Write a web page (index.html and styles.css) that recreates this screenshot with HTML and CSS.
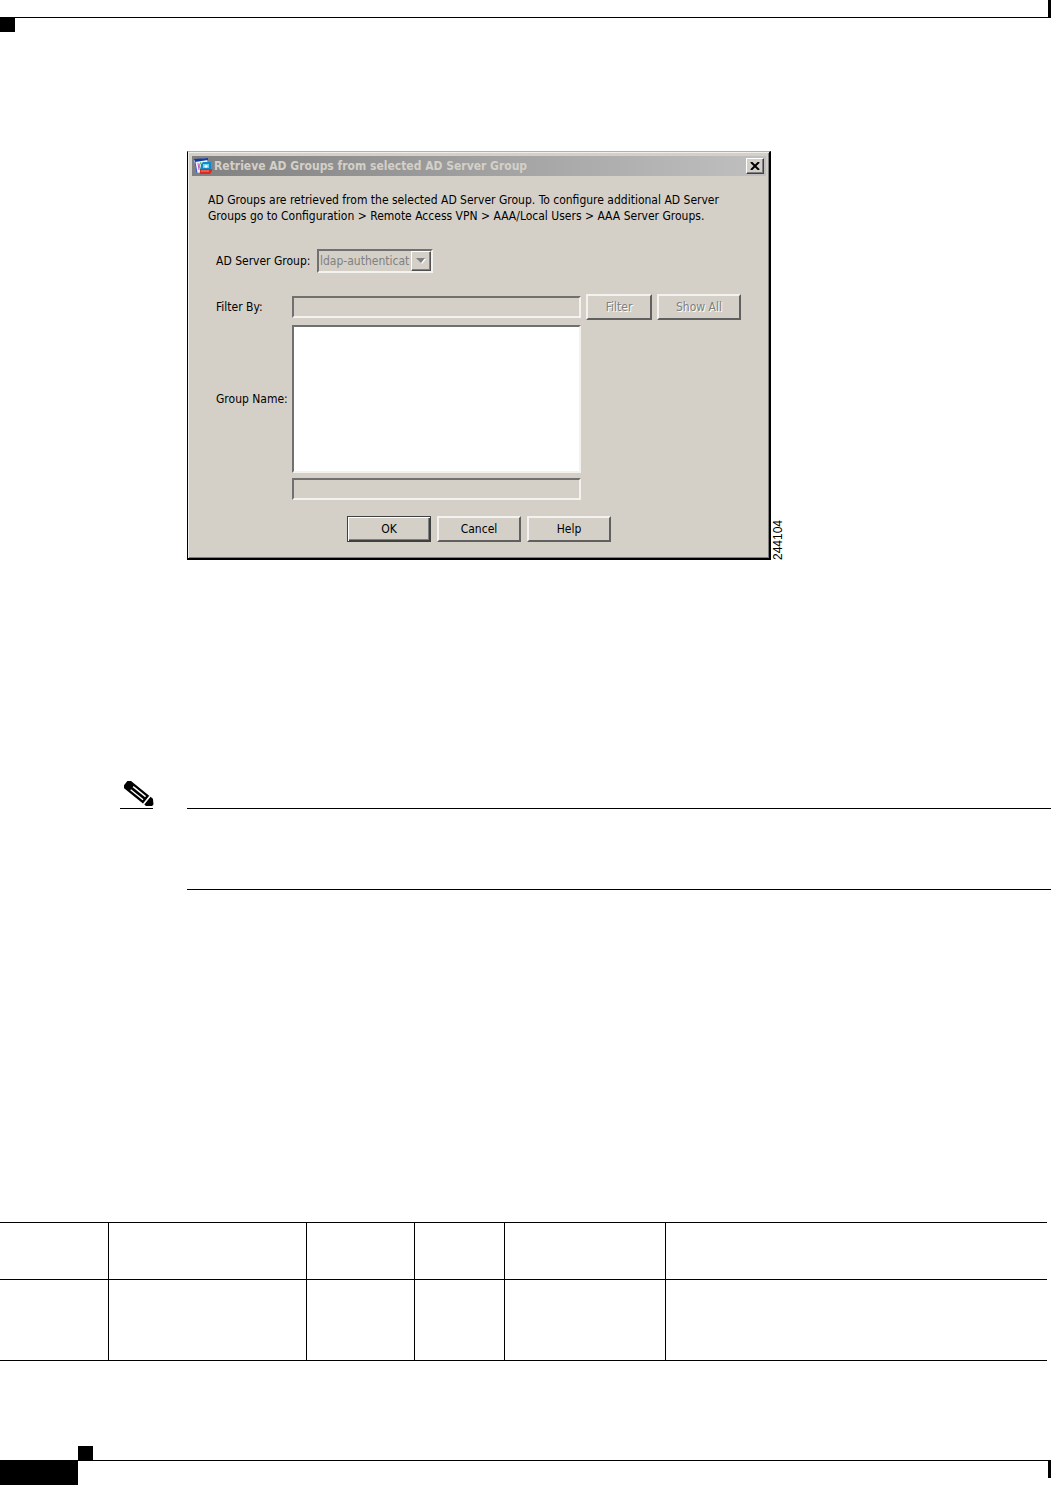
FILE: index.html
```
<!doctype html>
<html lang="en">

<head>
	<meta charset="utf-8">
	<title>Retrieve AD Groups</title>
	<link rel="stylesheet" href="styles.css">
</head>

<body>
	<!-- Page header rule -->
	<header class="page-header">
		<div class="header-tick"></div>
		<div class="header-square"></div>
	</header>

	<main>
		<figure class="figure">
			<div class="dialog" role="dialog" aria-labelledby="dialogTitle">
				<div class="title-bar">
					<svg class="title-icon" width="18" height="18" viewBox="0 0 18 18">
						<path d="M0 3L13 1L14 14L3 16Z" fill="#eef4ff"/>
						<path d="M0 2L14 1V3L1 5Z" fill="#173a9c"/>
						<path d="M4 6L5 13" stroke="#e04ad0" stroke-width="1" fill="none"/>
						<path d="M7 5L5 9L7 13" stroke="#38b838" stroke-width="1" fill="none"/>
						<path d="M1 5L3 16" stroke="#2b55d8" stroke-width="1"/>
						<path d="M7 7L9 5H17V14L15 17H6Z" fill="#1687c8"/>
						<path d="M6 12H18V14L16 17H6Z" fill="#dd2924"/>
						<path d="M9 7H15V11H9Z" fill="#67d8ef"/>
						<path d="M10 9L12 8L14 9L12 11Z" fill="#fff"/>
						<path d="M7 14H15" stroke="#ff8a78" stroke-width="1"/>
					</svg>
					<h1 class="title" id="dialogTitle">Retrieve AD Groups from selected AD Server Group</h1>
					<button class="btn-close" aria-label="Close">
						<svg width="10" height="8" viewBox="0 0 10 8"><path d="M1 0L9 8M9 0L1 8" stroke="#000" stroke-width="2"/></svg>
					</button>
				</div>
				<p class="intro">AD Groups are retrieved from the selected AD Server Group. To configure additional AD Server<br>
				Groups go to Configuration &gt; Remote Access VPN &gt; AAA/Local Users &gt; AAA Server Groups.</p>

				<div class="server-row">
					<label for="serverGroup">AD Server Group:</label>
					<div class="select-wrap">
						<select id="serverGroup" class="field server-select" disabled>
							<option>ldap-authenticat</option>
						</select>
						<span class="select-arrow"><svg width="10" height="6" viewBox="0 0 10 6"><path d="M2 1H10L6 6Z" fill="#fff"/><path d="M0 0H9L5 5Z" fill="#808080"/></svg></span>
					</div>
				</div>

				<div class="form-grid">
					<label for="filterBy">Filter By:</label>
					<input type="text" id="filterBy" class="field" disabled>
					<div class="filter-buttons">
						<button class="btn btn-filter" disabled>Filter</button>
						<button class="btn" disabled>Show All</button>
					</div>
					<label for="groupName">Group Name:</label>
					<select id="groupName" class="field group-list" size="8"></select>
					<input type="text" class="field selected-group" aria-label="Selected group" disabled>
				</div>

				<div class="btn-row">
					<button class="btn btn-default">OK</button>
					<button class="btn">Cancel</button>
					<button class="btn">Help</button>
				</div>
			</div>
			<figcaption class="figure-id">244104</figcaption>
		</figure>

		<!-- Note block -->
		<section class="note">
			<div class="note-icon">
				<svg width="30" height="25" viewBox="0 0 30 25">
					<!-- pencil drawn flat, then turned -->
					<g transform="translate(4 4) rotate(39)">
						<path d="M-3 -3Q-3 -5 -1 -5H24V5H-1Q-3 5 -3 3Z" fill="#000"/>
						<path d="M5 -2H21M5 2H21" stroke="#fff" stroke-width="1.4"/>
						<path d="M24 -5V5" stroke="#fff" stroke-width="1.4"/>
						<path d="M25 -5H28L32 -1V2L28 5H25Z" fill="#000"/>
					</g>
				</svg>
			</div>
			<div class="note-body"></div>
		</section>

		<table class="data-table">
			<colgroup>
				<col class="col-a"><col class="col-b"><col class="col-c"><col class="col-d"><col class="col-e"><col>
			</colgroup>
			<tr class="head-row"><th></th><th></th><th></th><th></th><th></th><th></th></tr>
			<tr class="body-row"><td></td><td></td><td></td><td></td><td></td><td></td></tr>
		</table>
	</main>

	<!-- Page footer rule -->
	<footer class="page-footer">
		<div class="footer-square"></div>
		<div class="footer-bar">
			<div class="page-number"></div>
			<div class="footer-tick"></div>
		</div>
	</footer>
</body>

</html>
```
FILE: styles.css
```
* { margin: 0; padding: 0; box-sizing: border-box; }
body { min-height: 100vh; display: flex; flex-direction: column; background-color: #fff; color: #000; font-family: "DejaVu Sans Condensed", "DejaVu Sans", sans-serif; font-size: 12px; line-height: 16px; }

.page-header { display: flex; flex-direction: column; }
.header-tick { height: 18px; border-right: 3px solid #000; border-bottom: 1px solid #000; }
.header-square { width: 15px; height: 14px; background-color: #000; }

/* dialog */
.figure { display: flex; align-items: flex-end; margin: 119px 0 0 187px; }
.dialog { width: 584px; padding: 4px 3px 16px 4px; background-color: #d4d0c8; border: 1px solid #000; border-top-color: #b4b0a8; border-right-width: 2px; border-bottom-width: 2px; box-shadow: inset 1px 1px #f0eeea, inset -1px -1px #808080; }
.title-bar { display: flex; align-items: center; height: 20px; padding: 0 2px; background: linear-gradient(to right, #808080, #c0c0c0); }
.title-icon { flex: none; }
.title { flex: 1; margin-left: 2px; color: #d4d0c8; font-size: 12px; font-weight: bold; white-space: nowrap; }
.btn-close { display: flex; align-items: center; justify-content: center; width: 18px; height: 16px; background-color: #d4d0c8; border: 1px solid; border-color: #fff #404040 #404040 #fff; box-shadow: inset -1px -1px #808080; }
.intro { padding: 16px 0 0 16px; white-space: nowrap; }
.server-row { display: flex; align-items: center; gap: 6px; padding: 25px 0 0 24px; }
.server-row label { width: 95px; white-space: nowrap; }

/* form controls */
.field { width: 100%; height: 22px; padding: 0 2px; font: inherit; color: #808080; background-color: #d4d0c8; border: 2px solid; border-color: #707070 #f4f2ee #f4f2ee #707070; border-radius: 0; outline: none; }
.select-wrap { position: relative; width: 116px; }
.server-select { display: block; appearance: none; height: 24px; padding: 0 1px; opacity: 1; white-space: nowrap; }
.select-arrow { position: absolute; top: 2px; right: 2px; bottom: 2px; width: 20px; display: flex; align-items: center; justify-content: center; background-color: #d4d0c8; border: 1px solid; border-color: #fff #505050 #505050 #fff; box-shadow: inset -1px -1px #808080; pointer-events: none; }
.form-grid { display: grid; grid-template-columns: 71px 289px 1fr; column-gap: 5px; row-gap: 5px; align-items: center; padding: 21px 24px 0 24px; }
.form-grid label { white-space: nowrap; }
.filter-buttons { display: flex; gap: 5px; }
.group-list { height: 148px; background-color: #fff; }
.selected-group { grid-column: 2; }
.btn { width: 84px; height: 26px; font: inherit; color: #000; background-color: #d4d0c8; border: 2px solid; border-color: #f4f2ee #606060 #606060 #f4f2ee; border-radius: 0; }
.btn:disabled { color: #808080; text-shadow: 1px 1px #fff; }
.btn-filter { width: 66px; }
.btn-default { border: 1px solid #404040; box-shadow: inset 1px 1px #fff, inset -1px -1px #404040, inset -2px -2px #808080; }
.btn-row { display: flex; justify-content: center; gap: 6px; padding-top: 16px; }
.figure-id { writing-mode: vertical-rl; transform: rotate(180deg); font-family: "Liberation Sans", Arial, sans-serif; font-size: 12px; line-height: 14px; }

/* note */
.note { display: flex; align-items: flex-start; gap: 34px; margin: 221px 0 0 120px; }
.note-icon { width: 33px; height: 28px; padding-left: 4px; border-bottom: 1px solid #000; }
.note-body { flex: 1; height: 82px; margin-top: 27px; border-top: 1px solid #000; border-bottom: 1px solid #000; }

/* table */
.data-table { width: calc(100% - 4px); margin-top: 332px; border-collapse: collapse; table-layout: fixed; }
.data-table tr { border-top: 1px solid #000; border-bottom: 1px solid #000; }
.data-table th + th, .data-table td + td { border-left: 1px solid #000; }
.head-row { height: 57px; }
.body-row { height: 81px; }
.col-a { width: 108px; }
.col-b { width: 198px; }
.col-c { width: 108px; }
.col-d { width: 90px; }
.col-e { width: 161px; }

.page-footer { margin-top: auto; }
.footer-square { width: 15px; height: 14px; margin-left: 78px; background-color: #000; }
.footer-bar { display: flex; justify-content: space-between; border-top: 1px solid #000; }
.page-number { width: 78px; height: 24px; background-color: #000; }
.footer-tick { width: 3px; height: 17px; background-color: #000; }
```
